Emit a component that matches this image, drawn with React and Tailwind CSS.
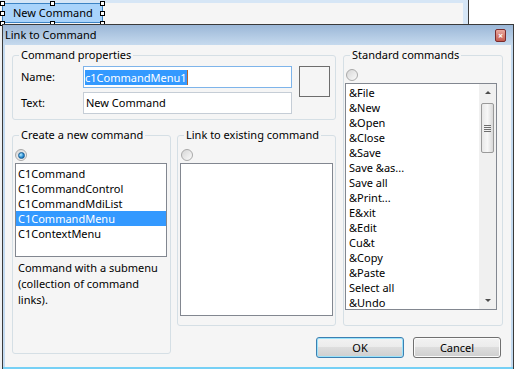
import React from 'react';

const standardCommands = [
  '&File', '&New', '&Open', '&Close', '&Save', 'Save &as...', 'Save all', '&Print...',
  'E&xit', '&Edit', 'Cu&t', '&Copy', '&Paste', 'Select all', '&Undo',
];

const newCommands = ['C1Command', 'C1CommandControl', 'C1CommandMdiList', 'C1CommandMenu', 'C1ContextMenu'];

function Radio({ checked }) {
  return (
    <span className="flex w-[12px] h-[12px] items-center justify-center rounded-full border border-[#a9a9a9] bg-gradient-to-br from-[#d6d6d6] to-[#fbfbfb]">
      {checked && (
        <span className="w-[7px] h-[7px] rounded-full border border-[#1b5f95] bg-[radial-gradient(circle_at_35%_35%,#bdeeff,#2a8fd6_55%,#0f4f86)]" />
      )}
    </span>
  );
}

function Group({ title, className, children }) {
  return (
    <fieldset className={`rounded-[3px] border border-[#d5dfe5] p-0 min-w-0 ${className}`}>
      <legend className="ml-[6px] px-[2px] text-[11px] leading-[16px]">{title}</legend>
      {children}
    </fieldset>
  );
}

function ScrollBar() {
  return (
    <div className="flex flex-col w-[17px] h-full bg-[#f0f0f0]">
      <div className="flex h-[17px] items-center justify-center">
        <span className="w-0 h-0 border-x-[3px] border-x-transparent border-b-[3px] border-b-[#4d4d4d]" />
      </div>
      <div className="mx-[2px] mt-[2px] h-[50px] rounded-[2px] border border-[#9a9a9a] bg-gradient-to-r from-[#e8e8e8] via-[#f7f7f7] to-[#d8d8d8] flex flex-col items-center justify-center gap-[1px]">
        <span className="w-[7px] h-[1px] bg-[#6e6e6e]" />
        <span className="w-[7px] h-[1px] bg-[#6e6e6e]" />
        <span className="w-[7px] h-[1px] bg-[#6e6e6e]" />
        <span className="w-[7px] h-[1px] bg-[#6e6e6e]" />
      </div>
      <div className="flex-1" />
      <div className="flex h-[17px] items-center justify-center">
        <span className="w-0 h-0 border-x-[3px] border-x-transparent border-t-[3px] border-t-[#4d4d4d]" />
      </div>
    </div>
  );
}

function Button({ children, focused }) {
  return (
    <button
      className={`w-[88px] h-[21px] rounded-[3px] border text-[11px] leading-[18px] text-black bg-[linear-gradient(#f2f2f2_0%,#ebebeb_50%,#dddddd_50%,#cfcfcf_100%)] ${
        focused ? 'border-[#3c7fb1] shadow-[inset_0_0_0_1px_#9be3fb]' : 'border-[#707070] shadow-[inset_0_0_0_1px_#fbfbfb]'
      }`}
    >
      {children}
    </button>
  );
}

export default function App() {
  return (
    <div className="w-[514px] h-[369px] overflow-hidden bg-[#eef0f2] font-['Noto_Sans',sans-serif] text-black">
      {/* designer form behind the dialog */}
      <div className="flex h-[24px] bg-white">
        <div className="relative flex w-[468px] border-t-[3px] border-r-[5px] border-[#d6e6f6] bg-[#f5f5f5]">
          <div className="relative ml-[2px] h-[20px] w-[101px] border border-[#3b83c4] bg-[#a8d3fb] pl-[10px] text-[11px] leading-[18px]">
            New Command
            <span className="absolute left-[-3px] top-[-3px] w-[5px] h-[5px] bg-white border border-black" />
            <span className="absolute left-[47px] top-[-3px] w-[5px] h-[5px] bg-white border border-black" />
            <span className="absolute right-[-3px] top-[-3px] w-[5px] h-[5px] bg-white border border-black" />
            <span className="absolute left-[-3px] top-[7px] w-[5px] h-[5px] bg-white border border-black" />
            <span className="absolute right-[-3px] top-[7px] w-[5px] h-[5px] bg-white border border-black" />
            <span className="absolute left-[-3px] bottom-[-4px] w-[5px] h-[5px] bg-white border border-black" />
            <span className="absolute left-[47px] bottom-[-4px] w-[5px] h-[5px] bg-white border border-black" />
            <span className="absolute right-[-3px] bottom-[-4px] w-[5px] h-[5px] bg-white border border-black" />
          </div>
        </div>
        <div className="w-[1px] bg-[#3a3a3a]" />
      </div>

      {/* dialog */}
      <div className="relative z-10 ml-[2px] flex h-[345px] w-[512px] flex-col border-x border-t border-[#3a3a3a] bg-[#f5f5f5]">
        <div className="flex h-[20px] items-center justify-between bg-gradient-to-b from-[#9bb7d7] to-[#c6daee] pl-[2px] pr-[7px]">
          <span className="text-[11px] leading-[16px]">Link to Command</span>
          <span className="flex h-[13px] w-[11px] items-center justify-center rounded-[2px] border border-[#7a2b2b] bg-gradient-to-b from-[#e9a9a0] to-[#c45a4e] text-[9px] font-bold leading-none text-white">
            ×
          </span>
        </div>

        <div className="flex-1 border-x-2 border-[#c3daf0] pl-[7px] pt-[2px]">
          <div className="grid grid-cols-[159px_160px_160px] grid-rows-[73px_199px_32px] gap-x-[6px] gap-y-[7px]">
            <Group title="Command properties" className="col-span-2 h-[73px] w-[324px]">
              <div className="flex pl-[8px] pt-[3px] text-[11px]">
                <div className="flex w-[62px] flex-col">
                  <span className="h-[22px] leading-[22px]">Name:</span>
                  <span className="mt-[4px] h-[22px] leading-[22px]">Text:</span>
                </div>
                <div className="flex w-[209px] flex-col gap-[4px]">
                  <div className="flex h-[22px] items-center border border-[#7eb4ea] bg-white pl-[1px]">
                    <span className="bg-[#3399ff] leading-[15px] text-white border-r border-r-[#b8642c]">c1CommandMenu1</span>
                  </div>
                  <div className="flex h-[22px] items-center border border-[#c5cdd6] bg-white pl-[2px]">
                    New Command
                  </div>
                </div>
                <div className="ml-[7px] h-[31px] w-[31px] border border-[#6d6d6d]" />
              </div>
            </Group>

            <Group title="Standard commands" className="row-span-2 h-[279px]">
              <div className="ml-[2px] mt-[6px]">
                <Radio />
              </div>
              <div className="ml-[1px] mt-[2px] flex h-[227px] w-[152px] border border-[#828790] bg-white">
                <div className="flex-1 pl-[3px] pt-[1px] text-[11px] leading-[15px]">
                  {standardCommands.map((c) => (
                    <div key={c} className="h-[15px] whitespace-nowrap">{c}</div>
                  ))}
                </div>
                <ScrollBar />
              </div>
            </Group>

            <Group title="Create a new command" className="row-span-2 h-[227px] self-start">
              <div className="ml-[2px] mt-[6px]">
                <Radio checked />
              </div>
              <div className="ml-[2px] mt-[2px] h-[94px] w-[152px] border border-[#828790] bg-white pt-[2px] text-[11px] leading-[15px]">
                {newCommands.map((c) => (
                  <div
                    key={c}
                    className={`h-[15px] pl-[2px] ${c === 'C1CommandMenu' ? 'bg-[#3399ff] text-white' : ''}`}
                  >
                    {c}
                  </div>
                ))}
              </div>
              <p className="ml-[5px] mt-[3px] w-[152px] text-[11px] leading-[16px]">
                Command with a submenu (collection of command links).
              </p>
            </Group>

            <Group title="Link to existing command" className="h-[199px] w-[159px]">
              <div className="ml-[3px] mt-[6px]">
                <Radio />
              </div>
              <div className="ml-[2px] mt-[2px] h-[153px] w-[153px] border border-[#828790] bg-white" />
            </Group>

            <div className="col-span-2 flex justify-end gap-[9px] pr-[2px] pt-[4px]">
              <Button focused>OK</Button>
              <Button>Cancel</Button>
            </div>
          </div>
        </div>
        <div className="h-[2px] bg-[#76d0f5]" />
      </div>
    </div>
  );
}
